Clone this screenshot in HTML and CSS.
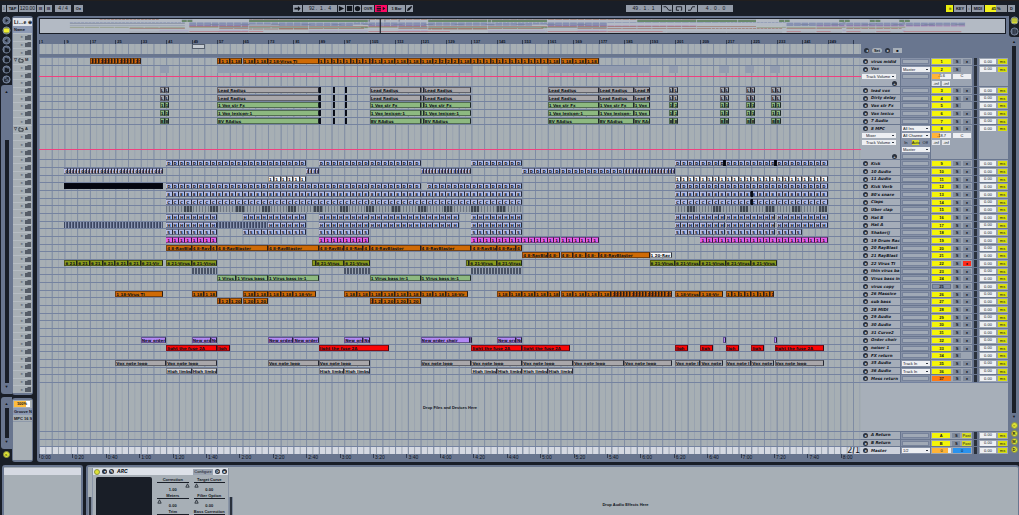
FILE: index.html
```html
<!DOCTYPE html>
<html lang="en">
<head>
<meta charset="utf-8">
<title>Arrangement</title>
<link rel="stylesheet" href="styles.css">
</head>
<body>
<header class="transport">
  <div class="group">
    <button class="tb w4" aria-label="External sync">⁞</button>
    <button class="tb w11">TAP</button>
    <input class="tb num w18" aria-label="Tempo" value="120.00">
    <button class="tb w7" aria-label="Nudge down">III</button>
    <button class="tb w7" aria-label="Nudge up">III</button>
    <input class="tb num w16 gap" aria-label="Time signature" value="4 / 4">
    <button class="tb w9 gap" aria-label="Metronome">O●</button>
  </div>
  <div class="group">
    <button class="tb w9" aria-label="Follow"><svg viewBox="0 0 9 8"><path d="M1 3h4V1l3 3-3 3V5H1z"/></svg></button>
    <input class="tb num w34" aria-label="Position" value="92 .  1 .  4">
    <button class="tb w7" aria-label="Play"><svg viewBox="0 0 8 8"><path d="M1 1l6 3-6 3z"/></svg></button>
    <button class="tb w7" aria-label="Stop"><svg viewBox="0 0 8 8"><path d="M1 1h6v6H1z"/></svg></button>
    <button class="tb w7" aria-label="Record"><svg viewBox="0 0 8 8"><circle cx="4" cy="4" r="3"/></svg></button>
    <button class="tb w12">OVR</button>
    <button class="tb w12 pink" aria-label="Back to arrangement"><svg viewBox="0 0 12 8"><path d="M1 1h5v1H1zM1 3h5v2H1zM1 6h5v1H1zM8 2l3 2-3 2z"/></svg></button>
    <select class="tb w18" aria-label="Quantization"><option>1 Bar</option></select>
    <button class="tb w7" aria-label="Draw mode"><svg viewBox="0 0 8 8"><path d="M1 7l1-3 4-3 1 1-3 4z"/></svg></button>
  </div>
  <div class="group">
    <input class="tb num w36" aria-label="Loop start" value="49 .  1 .  1">
    <button class="tb w10" aria-label="Punch in"><svg viewBox="0 0 10 8"><path class="ln" d="M1 2h3l3 4h3"/></svg></button>
    <button class="tb w12" aria-label="Loop"><svg viewBox="0 0 10 8"><path class="ln" d="M5 6H2V2h6v4H7"/></svg></button>
    <button class="tb w11" aria-label="Punch out"><svg viewBox="0 0 10 8"><path class="ln" d="M1 6h3l2-4h3"/></svg></button>
    <input class="tb num w36" aria-label="Loop length" value="4 .  0 .  0">
  </div>
  <div class="group">
    <button class="tb w7 yellow" aria-label="Computer keyboard">⌗</button>
    <button class="tb w12">KEY</button>
    <span class="tb w4">:</span>
    <button class="tb w12">MIDI</button>
    <span class="tb w22 cpu">45 %</span>
    <span class="tb w7">D</span>
  </div>
</header>

<main class="main">
  <nav class="rail">
    <div class="rail-icons">
      <button aria-label="Live devices"><svg viewBox="0 0 10 10"><circle cx="5" cy="5" r="4"/><path d="M4 3l3 2-3 2z"/></svg></button>
      <button class="lit" aria-label="Plug-ins"><svg viewBox="0 0 10 10"><circle cx="5" cy="5" r="4"/><path d="M2 3h6v4H2z"/></svg></button>
      <button aria-label="Browser"><svg viewBox="0 0 10 10"><circle cx="5" cy="5" r="4"/><path d="M6 3L3 5l3 2z"/></svg></button>
      <button aria-label="Files 1"><svg viewBox="0 0 10 10"><circle cx="5" cy="5" r="4"/><path d="M3 3h2l1 1h2v4H3z"/></svg></button>
      <button aria-label="Files 2"><svg viewBox="0 0 10 10"><circle cx="5" cy="5" r="4"/><path d="M3 3h2l1 1h2v4H3z"/></svg></button>
      <button aria-label="Files 3"><svg viewBox="0 0 10 10"><circle cx="5" cy="5" r="4"/><path d="M3 3h2l1 1h2v4H3z"/></svg></button>
      <button aria-label="Hot-swap"><svg viewBox="0 0 10 10"><circle cx="5" cy="5" r="4"/><path class="ring" d="M3 6l4-3M3 4v3h3M5 3h2v3"/></svg></button>
    </div>
    <div class="scroller grow"><span>▲</span><i class="track far"></i><span>▼</span></div>
    <div class="scroller groove-scroll"><span>▲</span><i class="track"></i><span>▼</span></div>
    <button class="dot corner" aria-label="Groove pool">≈</button>
  </nav>

  <aside class="browser">
    <section class="files">
      <div class="files-in">
        <div class="title">Li…e ⊕</div>
        <div class="colname">Name</div>
        <ul class="tree" id="tree"></ul>
      </div>
    </section>
    <section class="groove">
      <div class="files-in">
        <input class="amount" aria-label="Groove amount" value="100%">
        <div class="colname">Groove N</div>
        <div class="item">MPC 16 S</div>
      </div>
    </section>
  </aside>

  <section class="arrange">
    <div class="overview" id="overview"></div>
    <div class="split">
      <div class="ruler" id="ruler"></div>
      <div class="heads-top"></div>
    </div>
    <div class="split scrub-row">
      <div class="scrub lane"><span class="brace"></span></div>
      <div class="heads-top locator">
        <button class="round" aria-label="Previous locator">◂</button>
        <button class="pill">Set</button>
        <button class="round" aria-label="Next locator">▸</button>
        <button class="pill dark" aria-label="Lock envelopes">■</button>
      </div>
    </div>
    <div class="tracks" id="tracks"></div>
    <div class="split">
      <div class="times" id="times"></div>
      <div class="heads-top"></div>
    </div>
  </section>

  <nav class="rail right">
    <div class="rail-icons two">
      <button class="lit" aria-label="Arrangement view"><svg viewBox="0 0 10 10"><circle cx="5" cy="5" r="4"/><path d="M2 3h6v1H2zM2 5h6v1H2zM2 7h6v1H2z"/></svg></button>
      <button aria-label="Session view"><svg viewBox="0 0 10 10"><circle cx="5" cy="5" r="4"/><path d="M3 2h1v6H3zM5 2h1v6H5zM7 3h1v4H7z"/></svg></button>
    </div>
    <div class="scroller grow"><span>▲</span><i class="track"></i><span>▼</span></div>
    <div class="dots">
      <button class="dot" aria-label="Show in/out">○</button>
      <button class="dot" aria-label="Show returns">R</button>
      <button class="dot" aria-label="Show mixer">M</button>
      <button class="dot" aria-label="Show delay">D</button>
    </div>
  </nav>
</main>

<footer class="detail">
  <section class="info"><div class="info-title"></div></section>
  <section class="devices">
    <i class="handle"></i>
    <article class="device">
      <header class="device-bar">
        <button class="dot" aria-label="Device on"></button>
        <button class="round" aria-label="Unfold">▾</button>
        <button class="round" aria-label="Edit plug-in">✎</button>
        <h2>ARC</h2>
        <button class="config">Configure</button>
        <button class="round" aria-label="Hot-swap preset">⟳</button>
        <button class="round" aria-label="Save preset">■</button>
      </header>
      <div class="device-body">
        <div class="screen"></div>
        <div class="params" id="params"></div>
      </div>
    </article>
    <i class="handle"></i>
    <p class="drop">Drop Audio Effects Here</p>
  </section>
</footer>
<script src="app.js"></script>
</body>
</html>
```
FILE: styles.css
```css
* { box-sizing: border-box; }

body {
  margin: 0;
  height: 100vh;
  display: flex;
  flex-direction: column;
  overflow: hidden;
  background: #191e27;
  color: #10141b;
  font: bold 4px/6px "Liberation Sans", Arial, sans-serif;
}

button, input, select {
  appearance: none;
  margin: 0;
  padding: 0;
  border: 0;
  border-radius: 0;
  min-width: 0;
  color: inherit;
  font: inherit;
  text-align: center;
  background: none;
}

svg { display: block; fill: #10141b; }
ul, h2, p { margin: 0; padding: 0; list-style: none; font: inherit; }

/* Transport */
.transport {
  flex: none;
  height: 16px;
  padding-top: 4px;
  border-top: 1px solid #221f1e;
  display: grid;
  grid-template-columns: 291fr 333fr 320fr 73fr;
  padding-left: 2px;
}
.group { display: flex; gap: 1px; align-items: flex-start; }
.tb {
  height: 7px;
  flex: none;
  background: #939ba8;
  line-height: 7px;
  text-align: center;
  overflow: hidden;
}
.tb svg { width: 100%; height: 7px; }
.tb .ln { fill: none; stroke: #10141b; }
.num { font-size: 5px; font-weight: normal; white-space: pre; }
.gap { margin-left: 2px; }
.w4 { width: 4px; } .w7 { width: 7px; } .w9 { width: 9px; } .w10 { width: 10px; }
.w11 { width: 11px; } .w12 { width: 12px; } .w16 { width: 16px; } .w18 { width: 17px; }
.w22 { width: 22px; } .w34 { width: 34px; } .w36 { width: 35px; }
.pink { background: #ff0763; }
.yellow { background: #e9ee10; }
.cpu { background: linear-gradient(to right, #f2f21b 50%, #8f959e 50%); }

/* Main frame */
.main {
  flex: 1;
  min-height: 0;
  display: grid;
  grid-template-columns: 12px 21px minmax(0, 1fr) 10px;
  grid-template-rows: minmax(0, 1fr);
}
.rail { display: flex; flex-direction: column; min-height: 0; }
.rail-icons {
  height: 69px;
  display: flex;
  flex-direction: column;
  justify-content: space-between;
  align-items: center;
  background: #191e27;
  padding-bottom: 1px;
}
.rail-icons svg { width: 9px; height: 9px; fill: #191e27; }
.rail-icons circle { fill: #5e6b83; stroke: #7e8ba3; }
.rail-icons .ring { fill: none; stroke: #191e27; }
.rail-icons .lit circle { fill: #8c9540; }
.rail-icons .lit path { fill: #f0f030; }
.rail-icons.two { height: 21px; border-bottom-left-radius: 3px; }
.scroller {
  display: flex;
  flex-direction: column;
  align-items: center;
  margin-left: 1px;
  padding: 4px 2px;
  background: #69768f;
  border-radius: 3px 0 0 3px;
}
.grow { flex: 1; min-height: 0; }
.rail:not(.right) .grow { margin-bottom: 3px; }
.track { flex: 1; width: 4px; margin: 1px 0; background: #191e27; }
.far { margin-top: 45px; }
.groove-scroll { height: 52px; }
.dot {
  width: 7px;
  height: 7px;
  border-radius: 50%;
  background: #dfe234;
  border: 1px solid #8c9540;
  line-height: 5px;
}
.corner { margin: 2px 2px 4px; align-self: center; }
.right { background: #69768f; padding-bottom: 9px; }
.right .scroller { border-radius: 0; padding: 2px; margin: 0; }
.dots { display: grid; gap: 1px; justify-items: center; }

/* Browser */
.browser { display: flex; flex-direction: column; gap: 3px; min-height: 0; }
.files, .groove { background: #69768f; padding: 2px 1px 2px 1px; border-radius: 3px; min-height: 0; }
.files { flex: 1; }
.groove { height: 64px; }
.files-in {
  height: 100%;
  overflow: hidden;
  background: #a7afb5;
  display: flex;
  flex-direction: column;
}
.title { flex: none; height: 8px; line-height: 8px; background: #dfe3ea; padding-left: 1px; white-space: nowrap; font-size: 5px; }
.colname { flex: none; height: 7px; line-height: 7px; background: #8d9ab4; padding-left: 1px; white-space: nowrap; overflow: hidden; }
.tree { flex: 1; min-height: 0; display: grid; grid-auto-rows: minmax(0, 1fr); }
.tree li { display: flex; align-items: center; justify-content: flex-end; gap: 2px; padding-right: 1px; border-top: 1px solid #b6bdc3; color: #4c545f; }
.tree li.open { justify-content: flex-start; gap: 1px; padding-left: 1px; color: #20262f; overflow: hidden; }
.tree svg { width: 6px; height: 5px; flex: none; fill: #555c66; }
.tree .open svg { fill: none; stroke: #20262f; }
.amount { flex: none; width: 16px; height: 6px; margin: 1px; background: linear-gradient(to right, #ffbd3e 75%, #fff 75%); }
.item { height: 7px; line-height: 7px; padding-left: 1px; white-space: nowrap; overflow: hidden; border-bottom: 1px solid #8e99aa; }

/* Arrangement */
.arrange {
  margin-left: 4px;
  padding: 2px 1px 1px 2px;
  background: #69768f;
  border-radius: 3px 0 0 3px;
  display: flex;
  flex-direction: column;
  min-height: 0;
}
.overview { flex: none; height: 16px; margin-right: 2px; border: 1px solid #191e27; background: #b3bac4; }
.overview svg { width: 100%; height: 100%; }
.split { flex: none; display: grid; grid-template-columns: minmax(0, 1fr) 147px; }
.scrub-row { margin-bottom: 3px; }
.ruler, .times { position: relative; overflow: hidden; font-weight: normal; color: #0d1422; }
.ruler { height: 10px; }
.times { height: 7px; }
.ruler span, .times span { position: absolute; padding-left: 1px; border-left: 1px solid #2f3a50; }
.ruler span { bottom: 0; height: 4px; line-height: 3px; font-weight: bold; }
.times span { top: 0; height: 4px; line-height: 6px; font-size: 5px; }
.lane {
  position: relative;
  min-width: 0;
  overflow: hidden;
  background-color: #a7afb4;
  background-image:
    linear-gradient(to right, #7f8ca3 1px, transparent 1px),
    linear-gradient(to right, #98a2af 1px, transparent 1px);
  background-size: 1.5474% 100%, .7737% 100%;
}
.scrub { height: 10px; }
.brace { position: absolute; left: 18.6%; width: 1.6%; top: 0; height: 5px; border: 1px solid #555e6c; background: #c5cbd2; }
.locator { display: flex; gap: 3px; align-items: center; padding: 3px 0 0 3px; }
.round { width: 5px; height: 5px; flex: none; border-radius: 50%; background: #2a313c; color: #c9d0d9; font-size: 4px; line-height: 5px; overflow: hidden; }
.pill { width: 10px; height: 5px; border-radius: 3px; line-height: 5px; background: #a7afb9; }
.pill.dark { width: 9px; border-radius: 0; }

.tracks { flex: 1; min-height: 0; display: grid; }
.row { display: grid; grid-template-columns: minmax(0, 1fr) 147px; min-height: 0; }
.row > .lane { border-top: 1px solid #7583a0; }
.row.main-out .lane { background-color: #d5d9e2; }
.clip {
  position: absolute;
  top: 0;
  height: 100%;
  max-height: 6px;
  border: 1px solid rgba(12, 16, 28, .45);
  border-right-color: rgba(12, 16, 28, .85);
  line-height: 5px;
  font-family: "DejaVu Sans", sans-serif;
  white-space: nowrap;
  overflow: hidden;
}
.orange { background: #cf6a05; }
.grey { background: #a9a7aa; }
.pale { background: #cfd0d3; }
.green { background: #8db980; }
.olive { background: #8a9a1c; }
.lav { background: #b4bce6; border-left-width: 0; padding-left: 1px; }
.white { background: #f6f6f8; }
.black { background: #04060f; }
.mag { background: #e65ee8; border-left-width: 0; padding-left: 1px; }
.violet { background: #b389f5; }
.red { background: #fa0505; }
.stripe { border: 0; background: repeating-linear-gradient(to right, #3c4661 0 1px, #8d98b4 1px 2px, #525d78 2px 3px); }
.bars { border: 0; background: repeating-linear-gradient(to right, #4a5365 0 2px, #9aa3af 2px 3px); }
.clap { border: 0; background: repeating-linear-gradient(to right, #6f7884 0 1px, #99a1a8 1px 3px); }
.clapd { border: 0; background: repeating-linear-gradient(to right, #3f4650 0 2px, #7a828c 2px 3px); }
.ghost { border: 0; background: #929caf; max-height: 7px; }
.automation { position: absolute; left: 0; right: 0; height: 1px; background: #f0407f; }
.hint { position: absolute; left: 0; right: 0; top: 46%; text-align: center; }
.zoomed { position: absolute; right: 1px; bottom: 0; font: normal 8px/7px "DejaVu Sans", sans-serif; }

/* Track headers */
.head {
  display: grid;
  grid-template-columns: 40px 30px 42px 6px 29px;
  min-height: 0;
  border-top: 1px solid #69768f;
  background: #8792a8;
}
.head > div { min-width: 0; min-height: 0; overflow: hidden; border-right: 1px solid #69768f; }
.line { display: flex; align-items: center; height: 7px; gap: 2px; padding: 0 1px; }
.c-name { background: #a5adb9; }
.c-name .line { padding-left: 2px; }
.c-name .line.end { justify-content: flex-end; padding-right: 3px; }
.c-name b { font: italic bold 4px/6px "DejaVu Sans", sans-serif; white-space: nowrap; padding-left: 1px; }
.main-out .c-name { background: #ccd1db; }
.c-mix, .c-delay { background: #9ba4b2; }
.c-meter { background: #69768f; }
.c-meter i { display: block; width: 3px; height: 100%; margin-left: 1px; background: #2a313c; }
.head > .c-delay { border-right: 0; }
.slot { width: 28px; height: 5px; border: 1px solid #76829a; background: #a0a9b6; }
.sel {
  width: 28px;
  height: 5px;
  flex: none;
  background: #edeff3 linear-gradient(#333a46, #333a46) no-repeat right 2px center / 2px 1px;
  font-weight: normal;
  line-height: 5px;
  text-align: left;
  padding-left: 1px;
}
.c-name .sel { width: 34px; margin-left: -1px; padding-left: 4px; }
.no { width: 19px; height: 5px; background: #f4f40a; line-height: 5px; }
.no.off { background: #8792a8; border: 1px solid #69768f; line-height: 3px; }
.no.hot { background: #ff7a12; }
.sq { width: 8px; height: 5px; background: #7f8a9c; line-height: 5px; }
.sq.armed { background: #ff2a1a; }
.sq.post { width: 9px; background: #d8de2a; font-weight: normal; }
.vol { width: 19px; height: 5px; background: linear-gradient(to right, #ffb437 40%, #edeff3 40%); font-weight: normal; }
.vol.full { background: linear-gradient(to right, #ffb437 85%, #edeff3 85%); }
.pan { width: 18px; height: 5px; background: #edeff3; font-weight: normal; }
.pan.cue { background: #2a93ee; }
.inf { width: 8px; height: 5px; background: #e3e6eb; font-weight: normal; line-height: 5px; text-align: center; }
.io3 { width: 8px; height: 5px; line-height: 5px; background: #8792a8; font-weight: normal; }
.io3.on { background: #d8de2a; }
.delay { width: 16px; height: 5px; background: #edeff3; font-weight: normal; }
.ms { width: 9px; height: 5px; line-height: 5px; background: #d8de10; font-weight: normal; }
.rest { background: #a7afb9; border-top: 1px solid #7583a0; }

/* Detail area */
.detail { flex: none; height: 50px; margin-top: 3px; padding-left: 2px; display: flex; gap: 3px; }
.info { width: 81px; background: #a7afb6; border: 2px solid #69768f; border-bottom: 0; border-radius: 3px 3px 0 0; padding-top: 1px; }
.info-title { height: 7px; background: #d5d9e2; }
.devices { flex: 1; display: flex; background: #a7afb6; border: 2px solid #69768f; border-width: 2px 1px 0 2px; border-radius: 3px 3px 0 0; padding-top: 1px; overflow: hidden; }
.handle { width: 4px; margin-top: 29px; background: #2a313c; border: 1px solid #7b8799; border-width: 0 1px; }
.device { width: 137px; display: flex; flex-direction: column; border: 1px solid #8a95a6; border-width: 0 1px; }
.device-bar { height: 7px; display: flex; align-items: center; gap: 1px; padding: 0 1px; background: #dde1e8; }
.device-bar h2 { flex: 1; padding-left: 2px; font: italic bold 5px/7px Inter, sans-serif; }
.device-bar .round { margin-left: 1px; }
.device-bar .dot { width: 6px; height: 6px; }
.config { width: 20px; height: 6px; line-height: 6px; background: #9aa3b0; font-weight: normal; }
.device-body { flex: 1; min-height: 0; display: flex; gap: 5px; padding: 2px 3px 0 3px; }
.screen { width: 56px; background: #191e27; border-radius: 2px 2px 0 0; }
.params { flex: 1; display: grid; grid-template-columns: 1fr 1fr; grid-auto-rows: 16px; column-gap: 5px; text-align: center; }
.params label { display: block; height: 5px; line-height: 5px; white-space: nowrap; }
.params .line2 { height: 5px; position: relative; border-top: 1px solid #191e27; }
.params .line2 svg { position: absolute; top: 0; width: 5px; height: 5px; fill: #a7afb6; stroke: #20262f; }
.params output { display: block; height: 5px; line-height: 5px; }
.drop { flex: 1; align-self: flex-end; height: 13px; text-align: center; }
```
FILE: app.js
```js
const BARS = 258.5;
const pct = bars => (bars / BARS * 100).toFixed(3) + '%';

// A clip is [start bar, end bar, label, colour]; cut() splits a span into equal clips.
const cut = (from, to, step, label, colour) => {
  const out = [];
  for (let b = from; b < to; b += step) out.push([b, Math.min(b + step, to), label, colour]);
  return out;
};
const at = (label, colour, ...edges) => edges.slice(1).map((e, i) => [edges[i], e, label, colour]);
const loops = (label, colour, ...spans) => spans.flatMap(([a, b]) => cut(a, b, 2, label, colour));

const vocals = (name, short, colour) => [
  [39, 40.5, short, colour], [40.5, 42, short, colour],
  [57, 89, name, colour], [89, 89.6, '', 'black'], [93.3, 93.7, '', 'black'], [97.1, 97.5, '', 'black'],
  [105, 121, name, colour], [121, 122, '', colour], [122, 137, name, colour], ...at(name, colour, 161, 177, 188, 193),
  ...[199, 215.1, 223.3, 231.2].flatMap(b => at(short, colour, b, b + 1.5, b + 3))
];
const end = [201, 249], a = [41, 57], b = [89, 104.7], d = [137, 153];

const clap = [...cut(41, 153, 112, '', 'clap'), ...cut(201, 249, 48, '', 'clap')];
for (let n = 46.5; n < 153; n += 8.2) clap.push([n, n + 2.6, '', 'clapd']);
for (let n = 204.7; n < 248; n += 8.3) clap.push([n, n + 2.6, '', 'clapd']);

const V = '1 18-Virus TI', R = '4 8-RayBlaster', T = '6 21-Virus TI', N = 'Vox note loop', F = 'light the fuse 2A';
const tracks = [
  { name: 'virus midid', clips: [...cut(17, 33, 1, '1', 'orange'), ...at(V, 'orange', 57, 58, 61, 65, 69, 73), [73, 89, '2 18-Virus TI', 'orange'], ...cut(89, 105, 2, '1', 'orange'), ...at(V, 'orange', 105, 106, 109, 113, 117, 121, 125), ...cut(125, 133, 2, '2', 'orange'), [133, 137, V, 'orange'], ...cut(137, 161, 2, '1', 'orange'), ...cut(161, 177, 4, V, 'orange')] },
  { name: 'Vox', h: 2.78, io: 'Master', norec: 1, vol: '-5.6', line: 53, clips: [[39, 42], [57, 89], [105, 137], [161, 193], [199, 202], [215, 218], [223, 226], [231, 234]].map(s => [...s, '', 'ghost']) },
  { name: 'lead vox', clips: vocals('Lead Radius', 'L', 'grey') },
  { name: 'Dirty delay', clips: vocals('Lead Radius', 'L', 'grey') },
  { name: 'Vox str Fx', norec: 1, clips: vocals('1 Vox str Fx', '1', 'green') },
  { name: 'Vox lexico', clips: vocals('1 Vox lexicon-1', '1', 'green') },
  { name: '7 Audio', clips: vocals('BV RAdius', 'B', 'green') },
  { name: '8 MPC', h: 4.56, io: 'All Ins', vol: '-18.7', line: 69, mpc: 1, clips: [] },
  { name: 'Kick', clips: [...loops('D', 'lav', [41, 85], b, [105, 121], d, end), [216, 217, '', 'black'], [232, 233, '', 'black']] },
  { name: '10 Audio', clips: [...cut(9, 40, 1, '0', 'lav'), ...cut(85, 89, 1, 'I', 'lav'), ...cut(121, 137, 1, 'I', 'lav'), ...cut(153, 185, 2, 'D', 'lav'), ...cut(185, 201, 1, 'I', 'lav')] },
  { name: '11 Audio', clips: loops('1', 'white', [73, 85], end) },
  { name: 'Kick Verb', clips: [[9, 40, '', 'black'], ...loops('D', 'lav', [41, 104.7], [105, 121], [123, 153], end)] },
  { name: "80's snare", clips: [...loops('8', 'lav', [41, 104.7], [105, 153], end), [224.8, 225.3, '', 'black']] },
  { name: 'Claps', clips: [...loops('C', 'lav', [41, 104.7], [105, 153], end), [224.8, 225.3, '', 'black']] },
  { name: 'Uber clap', clips: clap },
  { name: 'Hat B', clips: loops('H', 'lav', a, [65, 85], b, [105, 133], d, [201, 216.6], [217, 232.6], [233, 249]) },
  { name: 'Hat A', clips: [[9, 40, '', 'stripe'], [57, 73, '', 'stripe'], ...loops('H', 'lav', a, [73, 85], b, [105, 133], d, [201, 216.6], [217, 232.6], [233, 249])] },
  { name: 'Shaker(j', clips: loops('S', 'lav', a, [65, 85], b, d, [201, 216.6], [217, 232.6], [233, 241]) },
  { name: '19 Drum Rac', clips: loops('1', 'mag', a, b, [137, 177], [209, 249]) },
  { name: '20 RayBlast', clips: at(R, 'orange', 41, 49, 55, 57, 73, 89, 97, 103, 105, 121, 137, 145, 151, 153) },
  { name: '21 RayBlast', clips: [...at(R, 'orange', 153, 161, 165, 169, 173, 177, 193), [193, 200, '1 20-RayBlas', 'white']] },
  { name: '22 Virus TI', armed: 1, clips: [...at(T, 'olive', 9, 13, 17, 21, 25, 29, 33, 40), ...at(T, 'olive', 41, 49, 57), [87, 88, '', 'olive'], ...at(T, 'olive', 88, 97, 105), [135.3, 136.3, '', 'olive'], ...at(T, 'olive', 136.3, 145, 153), ...at(T, 'olive', 193, 201, 209, 217, 225, 233)] },
  { name: 'thin virus ba', clips: [[49, 57], [97, 105], [137, 153]].map(s => [...s, '', 'bars']) },
  { name: 'Virus bass in', clips: [...at('1 Virus bass in-1', 'green', 57, 63, 73, 89), ...at('1 Virus bass in-1', 'green', 105, 121, 137)] },
  { name: 'virus copy', off: 1, clips: [] },
  { name: '26 Massive', clips: [[25, 40, V, 'orange'], ...at(V, 'orange', 49, 53, 57), ...at(V, 'orange', 65, 69, 73, 77, 81, 88), ...cut(97, 129, 4, V, 'orange'), [129, 136, V, 'orange'], ...cut(145, 181, 4, V, 'orange'), ...cut(181, 200, 1, '1', 'orange'), ...at(V, 'orange', 201, 209, 216), ...cut(217, 232, 2, '1', 'orange')] },
  { name: 'sub bass', clips: [...at('1 20-Massive', 'orange', 57, 58, 61, 65, 69, 73), ...at('1 20-Massive', 'orange', 105, 106, 109, 113, 117, 121)] },
  { name: '28 MIDI', clips: [] },
  { name: '29 Audio', clips: [] },
  { name: '30 Audio', clips: [] },
  { name: '31 Curve2', clips: [] },
  { name: 'Order choir', clips: [[33, 41], [49, 55], [55, 57], [73, 81], [81, 89], [97, 103], [103, 105], [121, 136.5], [145, 151], [151, 153]].map(s => [...s, 'New order choir', 'violet']).concat([[136.5, 137, '', 'violet'], [216, 217, '', 'violet'], [232, 233, '', 'violet']]) },
  { name: 'noiser 1', clips: [[41, 57], [57, 61], [89, 111], [137, 153], [153, 168], [201, 205], [209, 213], [217, 221], [225, 229], [232.3, 248]].map(s => [...s, F, 'red']) },
  { name: 'FX return', norec: 1, clips: [] },
  { name: '35 Audio', io: 'Track In', clips: [...at(N, 'grey', 25, 41, 57), ...at(N, 'grey', 73, 89, 105), ...at(N, 'grey', 121, 137, 153, 169, 185, 200), ...at(N, 'grey', 201, 209, 216), ...at(N, 'grey', 217, 225, 232.3, 248)] },
  { name: '36 Audio', io: 'Track In', clips: [...at('High limbs', 'pale', 41, 49, 57), ...at('High limbs', 'pale', 89, 97, 105), ...at('High limbs', 'pale', 137, 145, 153, 161, 169)] },
  { name: 'Mess return', hot: 1, clips: [] }
];

const sel = (text, label) => `<select class="sel" aria-label="${label}"><option>${text}</option></select>`;
const line = (html, extra = '') => `<div class="line ${extra}">${html}</div>`;
const slot = '<span class="slot"></span>';
const infs = '<span class="inf">-inf</span><span class="inf">-inf</span>';

function head(t, no) {
  const plus = line('<button class="round" aria-label="Add lane">+</button>', 'end');
  let name = line(`<button class="round" aria-label="Unfold ${t.name}">▸</button><b>${t.name}</b>`);
  let io = line(t.io ? sel(t.io, 'Routing') : slot);
  let mix;
  if (t.master) {
    mix = line('<input class="vol full" aria-label="Master volume" value="0"><input class="pan cue" aria-label="Cue volume" value="0">');
  } else {
    const last = t.ret ? '<button class="sq post">Post</button>' : t.norec ? '' : `<button class="sq ${t.armed ? 'armed' : ''}" aria-label="Arm">●</button>`;
    mix = line(`<button class="no ${t.off ? 'off' : ''} ${t.hot ? 'hot' : ''}">${no}</button><button class="sq">S</button>${last}`);
  }
  if (t.vol) {
    mix += line(`<input class="vol" aria-label="Volume" value="${t.vol}"><input class="pan" aria-label="Pan" value="C">`) + line(infs);
    if (t.mpc) {
      name += line(sel('Mixer', 'Device')) + line(sel('Track Volume', 'Control')) + line('') + plus;
      io += line(sel('All Channe', 'Channel')) + line('<button class="io3">In</button><button class="io3 on">Auto</button><button class="io3">Off</button>') + line(sel('Master', 'Output')) + line(slot);
    } else {
      name += line(sel('Track Volume', 'Control')) + plus;
      io += line(slot);
    }
  }
  return `<div class="head"><div class="c-name">${name}</div><div class="c-io">${io}</div><div class="c-mix">${mix}</div>
    <div class="c-meter"><i></i></div><div class="c-delay">${line('<input class="delay" aria-label="Track delay" value="0.00"><button class="ms">ms</button>')}</div></div>`;
}

// Clips too narrow for their whole name show as many leading letters as fit.
const fit = (text, bars) => text.slice(0, Math.max(1, Math.floor((bars * 3.18 - 1) / 2.4)));
const clipHtml = c => `<span class="clip ${c[3]}" title="${c[2]}" style="left:${pct(c[0] - 1)};width:${pct(c[1] - c[0])}">${fit(c[2], c[1] - c[0])}</span>`;
const rowHtml = (t, no, cls = '') => `<div class="row ${cls}"><div class="lane">${t.clips.map(clipHtml).join('')}${t.line ? `<i class="automation" style="top:${t.line}%"></i>` : ''}${t.master ? '<span class="zoomed">2/1</span>' : ''}</div>${head(t, no)}</div>`;

const box = document.getElementById('tracks');
box.innerHTML = tracks.map((t, i) => rowHtml(t, i + 1)).join('') +
  '<div class="row"><div class="lane"><p class="hint">Drop Files and Devices Here</p></div><div class="rest"></div></div>' +
  rowHtml({ name: 'A Return', ret: 1, clips: [] }, 'A') +
  rowHtml({ name: 'B Return', ret: 1, clips: [] }, 'B') +
  rowHtml({ name: 'Master', master: 1, io: '1/2', clips: [] }, '', 'main-out');
box.style.gridTemplateRows = [...tracks.map(t => t.h || 1), 6.4, 1, 1, 1].map(h => `minmax(0,${h}fr)`).join(' ');

const ink = { orange: '#8f3f22', grey: '#8a8c94', green: '#2c6420', olive: '#6f7d3c', lav: '#6b78a8', white: '#c9cdd4', black: '#5a6478', mag: '#a83aa0', violet: '#a486cf', red: '#d0404c', pale: '#c0c2c8', stripe: '#7a85a0', bars: '#7a85a0', clap: '#8a93a0', clapd: '#6a7484', ghost: '#99a2b2' };
document.getElementById('overview').innerHTML = `<svg viewBox="0 0 ${BARS} 37" preserveAspectRatio="none">` +
  tracks.map((t, y) => t.clips.map(c => `<rect x="${c[0] - 1}" y="${y}" width="${Math.max(.2, c[1] - c[0] - .2)}" height="1" fill="${ink[c[3]]}"/>`).join('')).join('') +
  '<rect x="91" y="0" width=".3" height="37" fill="#191e27"/></svg>';

let marks = '';
for (let n = 1; n <= 257; n += 8) marks += `<span style="left:${pct(n - 1)}">${n < 257 ? n : ''}</span>`;
document.getElementById('ruler').innerHTML = marks;

let times = '';
for (let s = 0; s <= 480; s += 20) times += `<span style="left:${pct(s * .5253)}">${Math.floor(s / 60)}:${String(s % 60).padStart(2, '0')}</span>`;
document.getElementById('times').innerHTML = times;

let rows = '';
for (let i = 0; i < 47; i++) {
  rows += i === 3 || i === 12
    ? `<li class="open">▽<svg viewBox="0 0 7 6"><path d="M1 1h2l1 1h2v3H1z"/></svg>${i === 3 ? 'M' : 'A'}</li>`
    : '<li>▹<svg viewBox="0 0 6 5"><path d="M0 1h2l1-1h3v5H0z"/></svg></li>';
}
document.getElementById('tree').innerHTML = rows;

document.getElementById('params').innerHTML = [
  ['Correction', '1.00', 90], ['Target Curve', '0.00', 0], ['Meters', '0.00', 0],
  ['Filter Option', '0.00', 0], ['Trim', '0.00', 50], ['Bass Correction', '0.00', 50]
].map(([n, v, p]) => `<div><label>${n}</label><div class="line2"><svg viewBox="0 0 6 6" style="left:${p}%"><path d="M3 1l2 4H1z"/></svg></div><output>${v}</output></div>`).join('');
```
